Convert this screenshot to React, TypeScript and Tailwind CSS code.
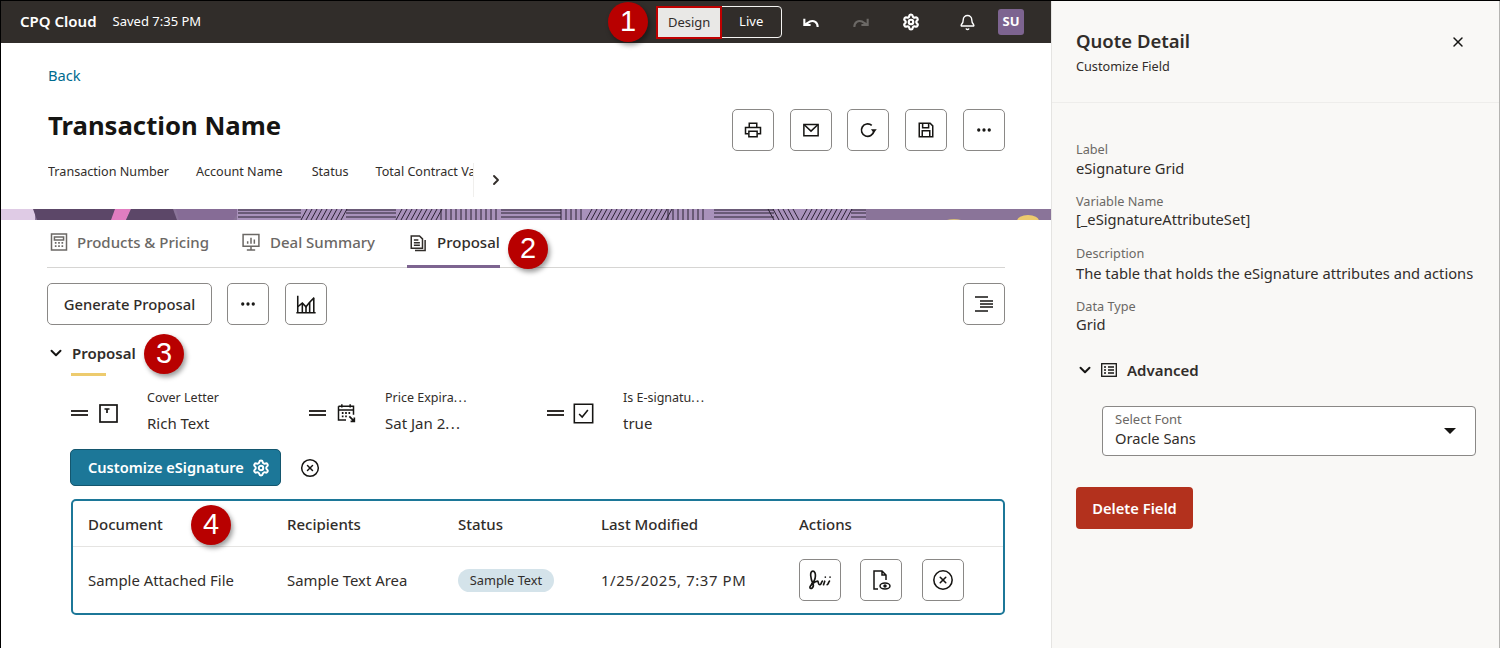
import { ChevronDown, ChevronRight, Ellipsis, Settings, Bell, X, CircleX } from "lucide-react";

const iconBtn = "w-[42px] h-[42px] shrink-0 flex items-center justify-center rounded-[5px] border border-[#8a8886] bg-white text-[#161513]";
const labelCls = "text-[12.7px] leading-[18px] text-[#6b6865]";
const valueCls = "text-[14.7px] leading-[20px] text-[#312d2a]";

function Marker({ n, className }: { n: string; className: string }) {
  return (
    <div className={`absolute w-10 h-10 rounded-full bg-[#b80000] text-white flex items-center justify-center text-[29px] shadow-[2px_3px_5px_rgba(0,0,0,0.4)] font-['Liberation_Sans',sans-serif] ${className}`}>
      {n}
    </div>
  );
}

function Ico({ size = 18, sw = 2, children }: { size?: number; sw?: number; children: React.ReactNode }) {
  return (
    <svg width={size} height={size} viewBox="0 0 24 24" fill="none" stroke="currentColor" strokeWidth={sw} className="shrink-0">
      {children}
    </svg>
  );
}

const segments: [number, number, string][] = [
  [237, 300, "h"], [300, 345, "d"], [345, 395, "h"], [395, 440, "d"], [440, 500, "v"], [500, 560, "h"],
  [560, 585, "v"], [585, 667, "d"], [667, 705, "v"], [713, 773, "h"], [773, 800, "b"], [800, 850, "d"], [850, 865, "h"],
];

function Banner() {
  const lines: React.ReactNode[] = [];
  segments.forEach(([a, b, t]) => {
    if (t === "h") {
      [1, 4, 8].forEach((y) => lines.push(<line key={`${a}-${y}`} x1={a} y1={y} x2={b} y2={y} stroke="#2b2233" strokeWidth="1" />));
    } else {
      for (let x = a; x < b; x += 5) {
        const lean = t === "d" ? 6 : t === "b" ? -6 : 0;
        lines.push(<line key={`${a}-${x}`} x1={x + lean} y1="0" x2={x} y2="11" stroke="#2b2233" strokeWidth="1" />);
      }
    }
  });
  return (
    <svg width="1050" height="11" viewBox="0 0 1050 11" className="block shrink-0">
      <rect width="1050" height="11" fill="#8a7499" />
      <rect width="34" height="11" fill="#dfcbe5" />
      <path d="M32 0H118L112 11H36Z" fill="#5c4768" />
      <path d="M114 0H130L125 11H110Z" fill="#e07dc0" />
      <path d="M130 0H172L176 11H125Z" fill="#5c4768" />
      <path d="M175 0H240L232 11H178Z" fill="#866c96" />
      <rect x="236" width="629" height="11" fill="#a992bb" />
      {lines}
      <rect x="865" width="185" height="11" fill="#8a7499" />
      <ellipse cx="1027" cy="12" rx="11" ry="6" fill="#edcb6e" />
      <ellipse cx="953" cy="13" rx="10" ry="3" fill="#d6bd7c" />
    </svg>
  );
}

function Dots() {
  return <span className="tracking-[1.4px]">...</span>;
}

function Field({ label, value, icon, className }: { label: React.ReactNode; value: React.ReactNode; icon: React.ReactNode; className: string }) {
  return (
    <div className={`flex items-start ${className}`}>
      <div className="w-[17px] h-[6px] mt-[20px] border-y-2 border-[#312d2a] shrink-0" />
      <div className="w-[20px] h-[20px] ml-[10px] mt-[13px] shrink-0 flex items-center justify-end text-[#161513]">{icon}</div>
      <div className="ml-[29px]">
        <div className="text-[12.5px] leading-[16px] text-[#312d2a]">{label}</div>
        <div className="text-[15px] leading-[20px] mt-[7px] text-[#312d2a]">{value}</div>
      </div>
    </div>
  );
}

export default function App() {
  return (
    <div className="w-[1500px] h-[648px] relative overflow-hidden flex bg-white border-t border-l border-black text-[#161513] font-['Noto_Sans',sans-serif]">
      <main className="w-[1050px] shrink-0 flex flex-col">
        <header className="h-[42px] shrink-0 bg-[#312d2a] flex items-center text-white">
          <span className="ml-[19px] -mt-px text-[15px] font-semibold">CPQ Cloud</span>
          <span className="ml-[16px] text-[13px]">Saved 7:35 PM</span>
          <div className="ml-[457px] flex items-center h-[32px] w-[124px] rounded-[4px] border border-[#f5f4f2] relative">
            <div className="absolute -left-[3px] -top-[1px] w-[66px] h-[33px] bg-[#e9e8e6] border-[2px] border-[#c00000] flex items-center justify-center text-[13px] text-[#312d2a]">Design</div>
            <span className="ml-[80px] text-[13px]">Live</span>
          </div>
          <span className="ml-[19px]">
            <Ico size={20} sw={2.5}><path d="M20 18c0-5.500-4.500-8.500-9.500-6.500L5 15" /><path d="M4 8v7.500h7.500" /></Ico>
          </span>
          <span className="ml-[30px] text-[#6b6865]">
            <Ico size={20} sw={2.5}><path d="M4 18c0-5.500 4.500-8.500 9.500-6.500L19 15" /><path d="M20 8v7.500h-7.500" /></Ico>
          </span>
          <Settings className="ml-[31px] w-[18px] h-[18px]" strokeWidth={2.9} />
          <Bell className="ml-[39px] w-[17px] h-[17px]" strokeWidth={2} />
          <div className="ml-[22px] w-[26px] h-[26px] rounded-[3px] bg-[#7d6490] flex items-center justify-center text-[13px] font-bold">SU</div>
        </header>

        <div className="pl-[47px] pr-[46px] pt-[22px] h-[166px] shrink-0">
          <a className="text-[14.7px] leading-[21px] block text-[#006b8f]">Back</a>
          <div className="flex items-start justify-between mt-[23px] h-[42px]">
            <h1 className="text-[25.7px] leading-[38px] -mt-[2px] font-bold">Transaction Name</h1>
            <div className="flex gap-[16px]">
              <div className={iconBtn}><Ico><path d="M7 8V3h10v5" /><path d="M6 17H2V8.500h20V17h-4" /><path d="M6.500 13.500h11V21h-11z" /></Ico></div>
              <div className={iconBtn}><Ico><path d="M2.500 4.500h19v15h-19z" /><path d="M3 5l9 8.500L21 5" /></Ico></div>
              <div className={`${iconBtn} -ml-px`}><Ico size={20}><path d="M16.500 6.500A7.500 7.500 0 1 0 19 13.500" /><path d="M15.500 11h7l-3.500 4.500z" fill="currentColor" stroke="none" /></Ico></div>
              <div className={iconBtn}><Ico><path d="M3 3h14.500L21 6.500V21H3z" /><path d="M7.500 3v6h8V3" /><path d="M7 21v-8h10v8" /></Ico></div>
              <div className={iconBtn}><Ellipsis className="w-[18px] h-[18px]" strokeWidth={2.4} /></div>
            </div>
          </div>
          <div className="flex items-start mt-[12px] text-[12.6px] leading-[18px] text-[#312d2a]">
            <div className="w-[425px] flex gap-[27px] overflow-hidden whitespace-nowrap">
              <span>Transaction Number</span>
              <span>Account Name</span>
              <span className="ml-[2px]">Status</span>
              <span>Total Contract Value</span>
            </div>
            <div className="h-[34px] pl-[14px] pt-[9px] border-l border-[#f0efed]">
              <ChevronRight className="w-[16px] h-[16px]" strokeWidth={2.8} />
            </div>
          </div>
        </div>

        <Banner />

        <div className="pl-[46px] pr-[46px]">
          <nav className="h-[48px] flex items-start border-b border-[#d6d5d3] text-[15px] font-medium text-[#6b6865]">
            <div className="flex items-center gap-[8px] mt-[11px] ml-[2px]">
              <Ico size={20} sw={1.8}><path d="M3 2.500h18v19H3z" /><path d="M6.500 6h11v3.500h-11z" /><path d="M7 13h2M11 13h2M15 13h2M7 17h2M11 17h2M15 17h2" strokeWidth="2.2" /></Ico>
              Products &amp; Pricing
            </div>
            <div className="flex items-center gap-[9px] mt-[11px] ml-[32px]">
              <Ico size={20} sw={1.8}><path d="M2.500 3h19v14h-19z" /><path d="M12 17v4M7 21.500h10" /><path d="M8 14v-3M12 14V7M16 14V9" /></Ico>
              Deal Summary
            </div>
            <div className="flex items-center gap-[10px] ml-[32px] pl-[2px] pt-[13px] h-[48px] pb-[13px] border-b-[3px] border-[#7d6490] text-[#312d2a] -mb-[1px]">
              <Ico size={18} sw={2}><path d="M3 2.500h11l4 4V19H3z" /><path d="M6.500 8h6M6.500 11.500h8M6.500 15h8" /><path d="M21.500 8v14H8" /></Ico>
              Proposal
            </div>
          </nav>

          <div className="flex items-center mt-[15px] gap-[15px]">
            <div className="h-[42px] w-[165px] rounded-[5px] border border-[#8a8886] flex items-center justify-center text-[14.8px] font-medium text-[#312d2a]">Generate Proposal</div>
            <div className={iconBtn}><Ellipsis className="w-[18px] h-[18px]" strokeWidth={2.4} /></div>
            <div className={`${iconBtn} ml-px`}>
              <Ico size={22} sw={1.7}><path d="M1.500 21.500h21M3 3v18" /><path d="M3 15l5-4 4 4 4-5 5-5" /><path d="M8 11v10M12 15v6M16 10v11M20.500 6v15" /></Ico>
            </div>
            <div className={`${iconBtn} ml-auto`}>
              <svg width="20" height="16" viewBox="0 0 20 16" stroke="#161513" strokeWidth="1.4">
                <path d="M1 1H14M6 5H19M6 8H19M6 11H19M1 15H14" />
              </svg>
            </div>
          </div>

          <div className="flex items-center mt-[17px] h-[22px]">
            <ChevronDown className="w-[18px] h-[18px]" strokeWidth={2.6} />
            <span className="ml-[7px] text-[15px] font-semibold text-[#312d2a]">Proposal</span>
          </div>
          <div className="ml-[24px] mt-[9px] w-[35px] h-[3px] bg-[#edcb6e]" />

          <div className="flex ml-[24px] mt-[14px] h-[45px]">
            <Field className="w-[238px]" label="Cover Letter" value="Rich Text" icon={
              <svg width="19" height="19" viewBox="0 0 19 19" fill="none" stroke="#161513" strokeWidth="1.7"><rect x="1" y="1" width="17" height="17" /><path d="M5.500 5H10.500M8 5V9" /></svg>
            } />
            <Field className="w-[238px]" label={<>Price Expira<Dots /></>} value={<>Sat Jan 2<Dots /></>} icon={
              <Ico size={20} sw={1.8}><path d="M3 4h18v10M12 20.500H3V4" /><path d="M3 8.500h18M7 1.500v4M17 1.500v4" /><path d="M7 12h2M11 12h2M15 12h2M7 16h2M11 16h2" strokeWidth="2.2" /><path d="M16 16l6 6M22 17.500V22h-4.500" strokeWidth="2" /></Ico>
            } />
            <Field className="w-[238px]" label={<>Is E-signatu<Dots /></>} value="true" icon={
              <Ico size={21} sw={1.8}><path d="M1.500 1.500h21v21h-21z" /><path d="M7 12.500l3.500 3.500L17 8" /></Ico>
            } />
          </div>

          <div className="flex items-center ml-[23px] mt-[14px]">
            <div className="w-[211px] h-[37px] pl-[17px] rounded-[5px] bg-[#1c7798] border border-[#14566e] flex items-center gap-[8px] text-white text-[14.6px] font-semibold">
              Customize eSignature
              <Settings className="w-[18px] h-[18px]" strokeWidth={2.6} />
            </div>
            <CircleX className="ml-[19px] w-[20px] h-[20px]" strokeWidth={1.8} />
          </div>

          <div className="ml-[24px] mt-[13px] w-[934px] h-[116px] rounded-[5px] border-2 border-[#1c7798]">
            <div className="h-[46px] pt-[2px] flex items-center border-b border-[#e5e4e2] text-[15px] font-medium text-[#312d2a]">
              <span className="w-[214px] pl-[15px]">Document</span>
              <span className="w-[171px]">Recipients</span>
              <span className="w-[143px]">Status</span>
              <span className="w-[198px]">Last Modified</span>
              <span>Actions</span>
            </div>
            <div className="h-[66px] flex items-center text-[14.9px] text-[#312d2a]">
              <span className="w-[214px] pl-[15px]">Sample Attached File</span>
              <span className="w-[171px]">Sample Text Area</span>
              <span className="w-[143px]">
                <span className="inline-flex items-center justify-center w-[96px] h-[23px] rounded-full bg-[#d4e3ea] text-[12.8px]">Sample Text</span>
              </span>
              <span className="w-[198px] tracking-[0.6px]">1/25/2025, 7:37 PM</span>
              <div className="flex gap-[19px]">
                <div className={iconBtn}>
                  <svg width="26" height="24" viewBox="0 0 22 20" fill="none" stroke="#161513" strokeWidth="1.4" strokeLinecap="round">
                    <path d="M4 13C8 10 8 2.500 5 2.500C2 2.500 3 9 5 13C6.500 16 3 18.500 2.500 16.500C2 14.500 7 11 9 11C10 11 9 14 11 14C12 14 12 12 13 11M14 14L15 11M17 14C18 14 18 12 19 11M15.500 7.500V7.600M19.500 7.500V7.600" />
                  </svg>
                </div>
                <div className={iconBtn}>
                  <svg width="20" height="22" viewBox="0 0 20 22" fill="none" stroke="#161513" strokeWidth="1.5">
                    <path d="M7 20H3V2H11L15 6V11M11 2V6H15" />
                    <ellipse cx="14" cy="17" rx="5" ry="3" />
                    <circle cx="14" cy="17" r="1" fill="#161513" />
                  </svg>
                </div>
                <div className={`${iconBtn} ml-px`}><CircleX className="w-[22px] h-[22px]" strokeWidth={1.7} /></div>
              </div>
            </div>
          </div>
        </div>
      </main>

      <aside className="flex-1 flex flex-col bg-[#f9f8f6] border-l border-[#e5e4e2] border-r border-r-[#b5b4b2]">
        <div className="h-[102px] shrink-0 border-b border-[#eeedeb] pl-[24px] pr-[33px] pt-[27px] flex justify-between items-start">
          <div>
            <div className="text-[18.5px] leading-[26px] font-semibold text-[#312d2a]">Quote Detail</div>
            <div className="text-[12.7px] leading-[18px] mt-[3px] text-[#312d2a]">Customize Field</div>
          </div>
          <X className="w-[16px] h-[16px] mt-[6px]" strokeWidth={2.2} />
        </div>
        <div className="pl-[24px] pt-[37px]">
          <div className={labelCls}>Label</div>
          <div className={valueCls}>eSignature Grid</div>
          <div className={`${labelCls} mt-[14px]`}>Variable Name</div>
          <div className={`${valueCls} -mt-px`}>[_eSignatureAttributeSet]</div>
          <div className={`${labelCls} mt-[15px]`}>Description</div>
          <div className={`${valueCls} mt-px whitespace-nowrap`}>The table that holds the eSignature attributes and actions</div>
          <div className={`${labelCls} mt-[14px]`}>Data Type</div>
          <div className={`${valueCls} -mt-px`}>Grid</div>
          <div className="flex items-center mt-[25px] h-[22px]">
            <ChevronDown className="w-[18px] h-[18px]" strokeWidth={2.6} />
            <svg className="ml-[7px]" width="16" height="14" viewBox="0 0 16 14" fill="none" stroke="#161513" strokeWidth="1.3">
              <rect x="0.7" y="0.7" width="14.600" height="12.600" />
              <path d="M3 4H5M7 4H13M3 7H5M7 7H13M3 10H5M7 10H13" />
            </svg>
            <span className="ml-[10px] text-[15px] font-semibold text-[#312d2a]">Advanced</span>
          </div>
          <div className="ml-[26px] mt-[25px] w-[374px] h-[50px] rounded-[4px] border border-[#8a8886] bg-white flex items-center justify-between pl-[12px] pr-[19px]">
            <div className="pb-[4px]">
              <div className="text-[13px] leading-[17px] text-[#6b6865]">Select Font</div>
              <div className={valueCls}>Oracle Sans</div>
            </div>
            <div className="w-0 h-0 border-x-[6px] border-x-transparent border-t-[6px] border-t-[#161513]" />
          </div>
          <div className="mt-[31px] w-[117px] h-[42px] rounded-[4px] bg-[#b3311d] flex items-center justify-center text-white text-[14.7px] font-semibold">Delete Field</div>
        </div>
      </aside>

      <Marker n="1" className="left-[607px] top-[1px]" />
      <Marker n="2" className="left-[507px] top-[228px]" />
      <Marker n="3" className="left-[143px] top-[333px]" />
      <Marker n="4" className="left-[190px] top-[504px]" />
    </div>
  );
}
